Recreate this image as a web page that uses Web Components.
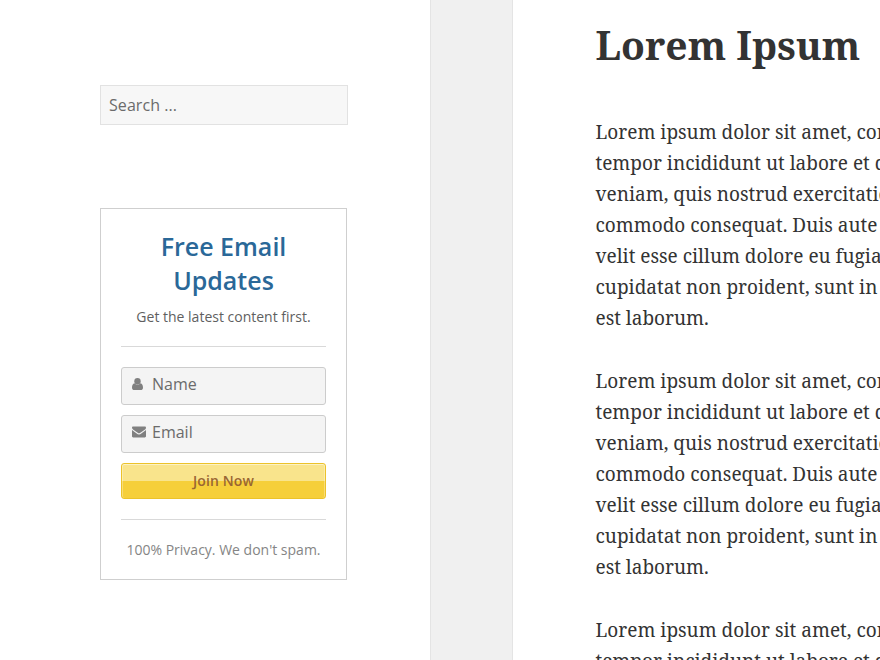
<!DOCTYPE html>
<html lang="en">
<head>
<meta charset="utf-8">
<title>Lorem Ipsum</title>
<style>
  html, body { margin: 0; height: 100%; overflow: hidden; background: #fff; }
</style>
</head>
<body>
<blog-page>
  <search-box slot="side" placeholder="Search ..."></search-box>
  <optin-card slot="side" heading="Free Email Updates" note="Get the latest content first." privacy="100% Privacy. We don't spam.">
    <optin-field icon="user">Name</optin-field>
    <optin-field icon="mail">Email</optin-field>
    <optin-button>Join Now</optin-button>
  </optin-card>
  <blog-article heading="Lorem Ipsum">
    <lorem-paragraph></lorem-paragraph>
    <lorem-paragraph></lorem-paragraph>
    <lorem-paragraph></lorem-paragraph>
  </blog-article>
</blog-page>
<script>
const define = (name, render) => customElements.define(name, class extends HTMLElement {
  constructor() {
    super();
    this.attachShadow({ mode: 'open' });
  }
  connectedCallback() {
    this.shadowRoot.innerHTML = render(this);
  }
});

define('blog-page', () => `
  <style>
    :host { display: grid; grid-template-columns: 430px 83px 1fr; height: 660px; overflow: hidden; font-family: "Open Sans", "Noto Sans", sans-serif; }
    aside { padding: 85px 0 0 100px; display: flex; flex-direction: column; align-items: flex-start; gap: 83px; }
    .gutter { background: #f0f0f0; border: solid #e4e4e4; border-width: 0 1px; }
    main { overflow: hidden; min-width: 0; }
  </style>
  <aside><slot name="side"></slot></aside>
  <div class="gutter"></div>
  <main><slot></slot></main>`);

define('search-box', el => `
  <style>
    :host { display: block; box-sizing: border-box; width: 248px; height: 40px; padding: 0 8px; border: 1px solid #e2e2e2; background: #f7f7f7; color: #6b6b6b; font-size: 16px; line-height: 38px; letter-spacing: .06px; }
  </style>
  <span>${el.getAttribute('placeholder')}</span>`);

define('optin-card', el => `
  <style>
    :host { display: block; box-sizing: border-box; width: 247px; height: 372px; padding: 20px; border: 1px solid #cfcfcf; background: #fff; text-align: center; }
    h2 { margin: 0; padding: 0 20px; font-size: 25px; line-height: 34px; font-weight: 600; color: #2a6898; }
    p { margin: 0; font-size: 14px; line-height: 20px; white-space: nowrap; }
    .note { margin-top: 10px; color: #5f5f5f; }
    .form { display: flex; flex-direction: column; gap: 10px; margin: 19px 0 20px; padding-top: 20px; border-top: 1px solid #d9d9d9; }
    .privacy { padding-top: 20px; border-top: 1px solid #d9d9d9; color: #858585; }
  </style>
  <h2>${el.getAttribute('heading')}</h2>
  <p class="note">${el.getAttribute('note')}</p>
  <div class="form"><slot></slot></div>
  <p class="privacy">${el.getAttribute('privacy')}</p>`);

const icons = {
  user: '<circle cx="5.500" cy="3.200" r="3.200"/><path d="M2.500 5.200C.8 5.400 0 7.200 0 9.700 0 11.100 1 12 2.300 12h6.400c1.300 0 2.300-.9 2.300-2.300 0-2.500-.8-4.300-2.500-4.500C7.700 6.100 6.700 6.600 5.500 6.600S3.300 6.100 2.500 5.200z"/>',
  mail: '<path d="M1.200.5h11.600C13.500.5 14 1 14 1.700c0 .8-.6 1.600-1.300 2.100L8.700 6.600C8.100 7 7.600 7.400 7 7.400S5.900 7 5.300 6.600L1.300 3.800C.7 3.400 0 2.500 0 1.800 0 1 .4.5 1.200.5z"/><path d="M0 4.100l4.700 3.300C5.400 7.900 6.200 8.400 7 8.400s1.600-.5 2.300-1L14 4.100v6.200c0 .7-.6 1.200-1.200 1.200H1.200C.5 11.500 0 11 0 10.300z"/>'
};

define('optin-field', el => `
  <style>
    :host { display: flex; box-sizing: border-box; height: 38px; padding: 0 10px 4px; align-items: center; gap: 6px; border: 1px solid #ccc; border-radius: 3px; background: #f4f4f4; color: #6b6b6b; font-size: 16px; line-height: 22px; }
    svg { width: 14px; height: 12px; fill: #808080; }
  </style>
  <svg viewBox="0 0 14 12" preserveAspectRatio="xMinYMid meet" aria-hidden="true">${icons[el.getAttribute('icon')]}</svg>
  <span><slot></slot></span>`);

define('optin-button', () => `
  <style>
    :host { display: block; box-sizing: border-box; height: 36px; border: 1px solid #ecc22a; border-radius: 3px; background: linear-gradient(#f9e48c 50%, #f6cf3a 50%); box-shadow: inset 0 1px 0 #fcf2c4, inset 1px 0 0 rgba(255,255,255,.3), inset -1px 0 0 rgba(255,255,255,.3); color: #996633; font-size: 14px; font-weight: 600; letter-spacing: .1px; line-height: 34px; text-align: center; }
  </style>
  <span><slot></slot></span>`);

define('blog-article', el => `
  <style>
    :host { display: block; padding: 21px 0 0 82.500px; color: #333; font-family: "Noto Serif", serif; white-space: nowrap; }
    h1 { margin: 0 0 48px; font-size: 39px; line-height: 48px; font-weight: 700; }
    .body { display: flex; flex-direction: column; gap: 32px; }
  </style>
  <h1>${el.getAttribute('heading')}</h1>
  <div class="body"><slot></slot></div>`);

define('lorem-paragraph', () => `
  <style>
    :host { display: block; font-size: 19px; line-height: 31px; }
    p { margin: 0; }
  </style>
  <p>Lorem ipsum dolor sit amet, consectetur adipiscing elit, sed do eiusmod<br>
  tempor incididunt ut labore et dolore magna aliqua. Ut enim ad minim<br>
  veniam, quis nostrud exercitation ullamco laboris nisi ut aliquip ex ea<br>
  commodo consequat. Duis aute irure dolor in reprehenderit in voluptate<br>
  velit esse cillum dolore eu fugiat nulla pariatur. Excepteur sint occaecat<br>
  cupidatat non proident, sunt in culpa qui officia deserunt mollit anim id<br>
  est laborum.</p>`);
</script>
</body>
</html>
